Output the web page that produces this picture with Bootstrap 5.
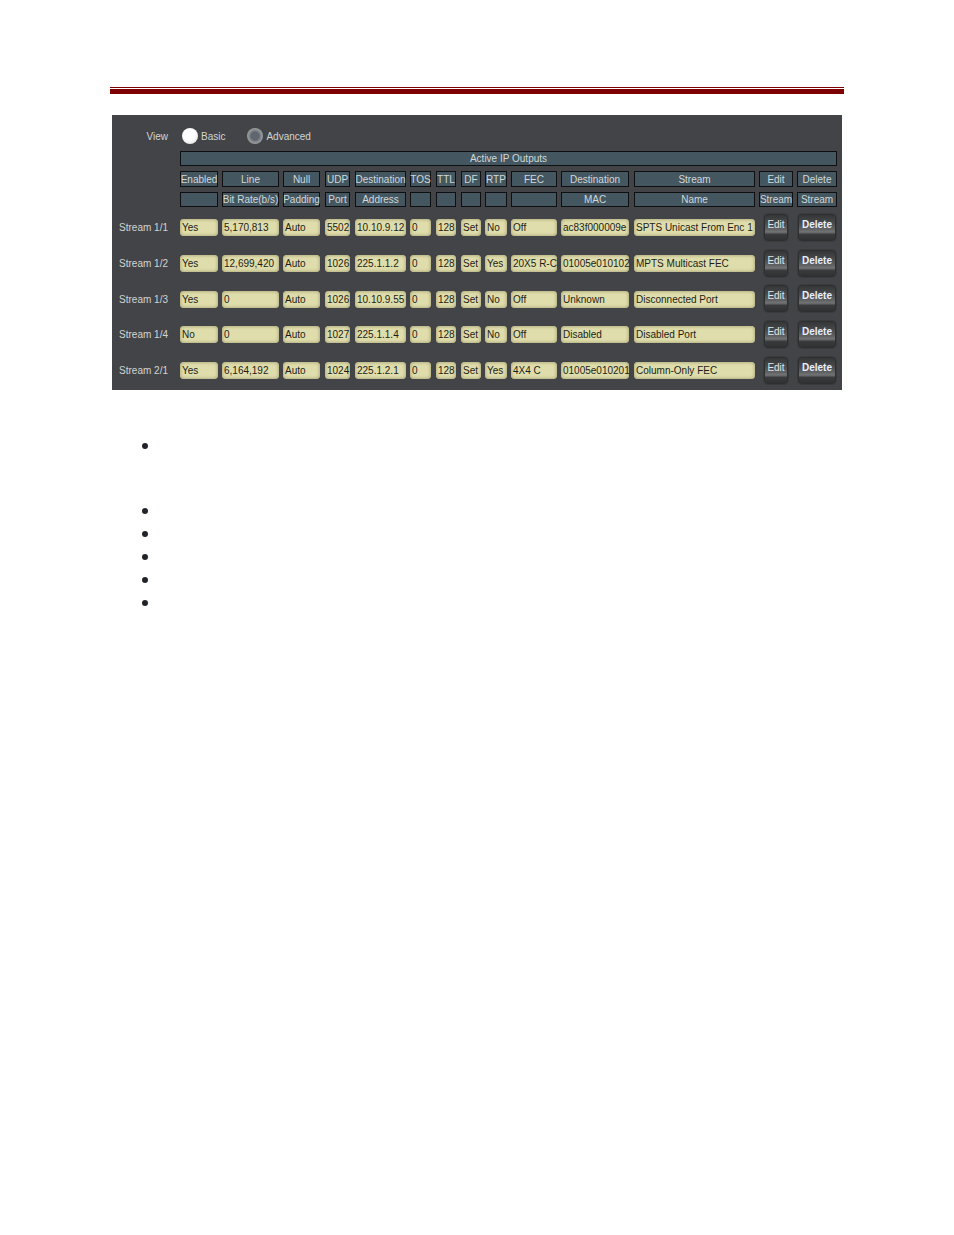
<!doctype html>
<html lang="en">
<head>
<meta charset="utf-8">
<title>Active IP Outputs</title>
<link rel="stylesheet" href="https://cdn.jsdelivr.net/npm/bootstrap@5.3.0/dist/css/bootstrap.min.css">
<style>
body{background:#fff;font-family:"Liberation Sans",Arial,sans-serif;}
.page-wrap{padding:87px 110px 0;}
.rule-thin{height:1px;background:#7f0000;margin-bottom:1px;}
.rule-thick{height:5px;background:#7f0000;}
.ui-panel{width:730px;height:275px;margin:21px 0 0 2px;background:#434447;color:#d0d5d6;font-size:10px;line-height:1;}
.view-row{height:36px;padding-top:7px;}
.view-label{width:56px;text-align:right;margin-right:14px;}
.radio-dot{width:16px;height:16px;border-radius:50%;margin:-1px 3px 0 0;flex:none;}
.radio-off{background:radial-gradient(circle at 45% 40%,#fff 40%,#d8d8d8 100%);}
.radio-on{background:radial-gradient(circle,#5f6670 0 35%,#8b8f92 55%,#b5b5b5 100%);margin-left:22px;}
.ui-grid{display:grid;column-gap:4px;grid-template-columns:64px 38px 57px 38px 26px 51px 22px 21px 20px 22px 46px 69px 121px 34px 40px;}
.title-bar{grid-column:2 / -1;height:15px;margin-bottom:5px;}
.head-cell{background:#445660;border:1px solid #0d0f10;display:flex;align-items:center;justify-content:center;white-space:nowrap;color:#d0d8da;padding-top:1px;}
.h-a{height:16px;margin-bottom:5px;padding-top:2px;}
.h-b{height:15px;margin-bottom:3px;}
.ui-grid>:nth-child(4),.ui-grid>:nth-child(5),.ui-grid>:nth-child(7),.ui-grid>:nth-child(8),.ui-grid>:nth-child(12){margin-right:1px;}
.data-row{height:35.7px;align-items:center;}
.row-label{text-align:right;padding-right:8px;white-space:nowrap;padding-top:1px;}
.val-cell{height:17px;background:#e0ddac;border-radius:4px;box-shadow:inset 0 0 3px 1px #b3b082;color:#1c1d16;padding:1px 0 0 2px;display:flex;align-items:center;white-space:nowrap;}
.act-btn{height:27px;border:1px solid #2e2f31;border-radius:4px;box-shadow:0 0 0 1px #3a3b3d;color:#e0e6e8;font-size:10px;line-height:1;background:linear-gradient(#353638 0,#47484a 30%,#626365 58%,#737476 68%,#3a3b3d 78%,#303133 100%);display:flex;justify-content:center;padding:5px 0 0;}
.act-edit{margin:-1px 5px 0 5px;}
.act-del{margin:-1px 1px 0 1px;font-weight:700;color:#e8f0ff;}
.dot-list{margin:43px 0 0;padding:0 0 0 51px;list-style:disc;font-size:21px;line-height:23px;}
.dot-list li{height:23px;}
.dot-list li.tall{height:65px;}
</style>
</head>
<body>
<div class="page-wrap">
  <div class="rule-thin"></div>
  <div class="rule-thick"></div>
  <div class="ui-panel">
    <div class="view-row d-flex align-items-center">
      <div class="view-label">View</div>
      <span class="radio-dot radio-off"></span><span>Basic</span>
      <span class="radio-dot radio-on"></span><span>Advanced</span>
    </div>
    <div class="ui-grid">
      <div></div><div class="head-cell title-bar">Active IP Outputs</div>
    </div>
    <div class="ui-grid" id="heads1"></div>
    <div class="ui-grid" id="heads2"></div>
    <div id="rows"></div>
  </div>
  <ul class="dot-list">
    <li class="tall"></li><li></li><li></li><li></li><li></li><li></li>
  </ul>
</div>
<script src="https://cdn.jsdelivr.net/npm/bootstrap@5.3.0/dist/js/bootstrap.bundle.min.js"></script>
<script>
const h1=['Enabled','Line','Null','UDP','Destination','TOS','TTL','DF','RTP','FEC','Destination','Stream','Edit','Delete'];
const h2=['','Bit Rate(b/s)','Padding','Port','Address','','','','','','MAC','Name','Stream','Stream'];
const data=[
['Stream 1/1','Yes','5,170,813','Auto','5502','10.10.9.12','0','128','Set','No','Off','ac83f000009e','SPTS Unicast From Enc 1'],
['Stream 1/2','Yes','12,699,420','Auto','1026','225.1.1.2','0','128','Set','Yes','20X5 R-C','01005e010102','MPTS Multicast FEC'],
['Stream 1/3','Yes','0','Auto','1026','10.10.9.55','0','128','Set','No','Off','Unknown','Disconnected Port'],
['Stream 1/4','No','0','Auto','1027','225.1.1.4','0','128','Set','No','Off','Disabled','Disabled Port'],
['Stream 2/1','Yes','6,164,192','Auto','1024','225.1.2.1','0','128','Set','Yes','4X4 C','01005e010201','Column-Only FEC']];
document.getElementById('heads1').innerHTML='<div class="h-a"></div>'+h1.map(t=>`<div class="head-cell h-a">${t}</div>`).join('');
document.getElementById('heads2').innerHTML='<div class="h-b"></div>'+h2.map(t=>`<div class="head-cell h-b">${t}</div>`).join('');
document.getElementById('rows').innerHTML=data.map(r=>`<div class="ui-grid data-row"><div class="row-label">${r[0]}</div>`+r.slice(1).map(t=>`<div class="val-cell">${t}</div>`).join('')+`<button type="button" class="btn act-btn act-edit">Edit</button><button type="button" class="btn act-btn act-del">Delete</button></div>`).join('');
</script>
</body>
</html>
